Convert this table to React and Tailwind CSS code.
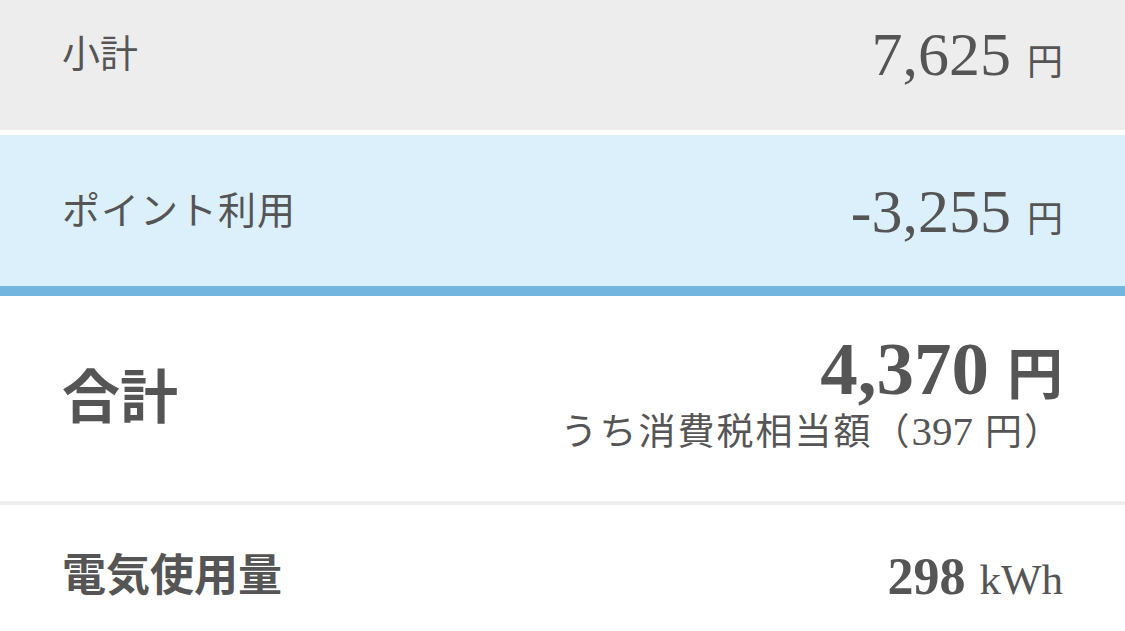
import React from 'react';

const font = { fontFamily: '"Liberation Serif", "Noto Sans CJK JP", serif' };

const Row = ({ className, label, value }) => (
  <div className={`flex items-center justify-between px-[62px] ${className}`}>
    {label}
    {value}
  </div>
);

const App = () => {
  return (
    <div className="w-[1125px] h-[631px] overflow-hidden bg-white text-[#555555]" style={font}>
      {/* subtotal */}
      <Row
        className="h-[130px] pb-[22px] bg-[#ededed]"
        label={<span className="text-[38px] leading-none">小計</span>}
        value={
          <span className="flex items-baseline leading-none">
            <span className="text-[62px]">7,625</span>
            <span className="text-[36px] ml-[16px]">円</span>
          </span>
        }
      />
      <div className="h-[5px] bg-white" />

      {/* points */}
      <Row
        className="h-[151px] bg-[#dbf0fb]"
        label={<span className="text-[38px] leading-none tracking-[1px]">ポイント利用</span>}
        value={
          <span className="flex items-baseline leading-none">
            <span className="text-[62px]">-3,255</span>
            <span className="text-[36px] ml-[16px]">円</span>
          </span>
        }
      />
      <div className="h-[10px] bg-[#72b5de]" />

      {/* total */}
      <Row
        className="h-[205px] pb-[10px]"
        label={<span className="text-[58px] font-bold leading-none mt-[10px]">合計</span>}
        value={
          <div className="flex flex-col items-end">
            <span className="flex items-baseline leading-[0.9] font-bold">
              <span className="text-[75px]">4,370</span>
              <span className="text-[56px] ml-[18px]">円</span>
            </span>
            <span className="flex items-baseline text-[37px] leading-none mt-[9px] tracking-[2px]">
              うち消費税相当額（<span className="text-[41px] tracking-normal">397</span>
              <span className="ml-[12px]">円）</span>
            </span>
          </div>
        }
      />
      <div className="h-[4px] bg-[#eeeeee]" />

      {/* usage */}
      <Row
        className="h-[144px]"
        label={<span className="text-[44px] font-bold leading-none">電気使用量</span>}
        value={
          <span className="flex items-baseline leading-none">
            <span className="text-[52px] font-bold">298</span>
            <span className="text-[43px] ml-[14px]">kWh</span>
          </span>
        }
      />
    </div>
  );
};

export default App;
